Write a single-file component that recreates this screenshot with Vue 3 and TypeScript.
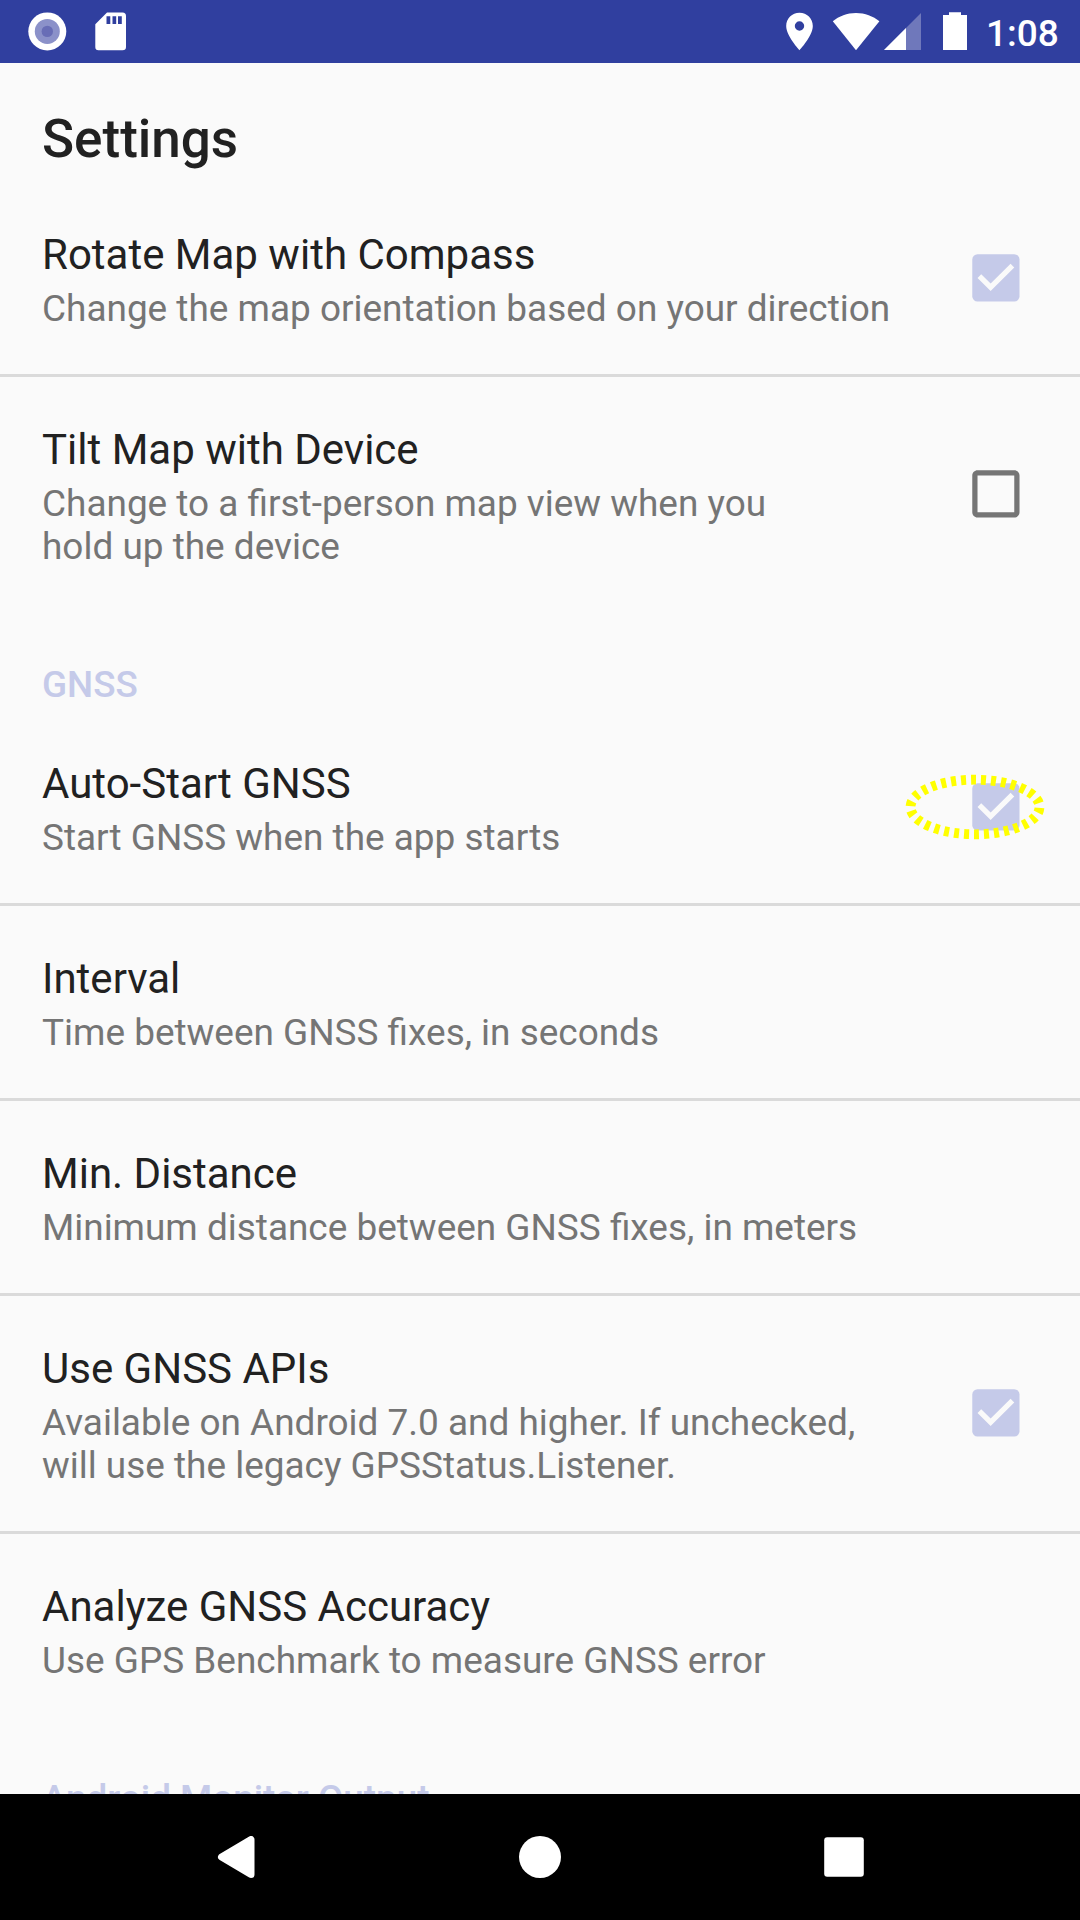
<script setup lang="ts">
interface Preference {
  title: string
  summary: string[]
  checked?: boolean
  highlighted?: boolean
}

interface Section {
  heading?: string
  items: Preference[]
}

const sections: Section[] = [
  {
    items: [
      { title: 'Rotate Map with Compass', summary: ['Change the map orientation based on your direction'], checked: true },
      { title: 'Tilt Map with Device', summary: ['Change to a first-person map view when you', 'hold up the device'], checked: false },
    ],
  },
  {
    heading: 'GNSS',
    items: [
      { title: 'Auto-Start GNSS', summary: ['Start GNSS when the app starts'], checked: true, highlighted: true },
      { title: 'Interval', summary: ['Time between GNSS fixes, in seconds'] },
      { title: 'Min. Distance', summary: ['Minimum distance between GNSS fixes, in meters'] },
      { title: 'Use GNSS APIs', summary: ['Available on Android 7.0 and higher. If unchecked,', 'will use the legacy GPSStatus.Listener.'], checked: true },
      { title: 'Analyze GNSS Accuracy', summary: ['Use GPS Benchmark to measure GNSS error'] },
    ],
  },
  { heading: 'Android Monitor Output', items: [] },
]
</script>

<template>
  <div class="screen">
    <header class="status">
      <svg class="notifications" width="140" height="63" viewBox="0 0 140 63">
        <circle cx="47.3" cy="31.4" r="19" fill="#fff" />
        <circle cx="47.3" cy="31.4" r="12.5" fill="#8b91c9" />
        <circle cx="47.3" cy="31.4" r="5.7" fill="#686db6" />
        <path fill="#fff" fill-rule="evenodd" d="M107 12.500H122.500Q126 12.500 126 16V47Q126 50.300 122.500 50.300H98.500Q95.300 50.300 95.300 47V24.200ZM106.500 16.300V24H110.300V16.300ZM112.500 16.300V24H116.200V16.300ZM118 16.300V24H121.800V16.300Z" />
      </svg>
      <div class="system">
        <svg width="190" height="63" viewBox="780 0 190 63">
          <path fill="#fff" fill-rule="evenodd" d="M799.500 12.700C792.100 12.700 786.200 18.600 786.200 26C786.200 36 799.500 50.200 799.500 50.200S812.800 36 812.800 26C812.800 18.600 806.900 12.700 799.500 12.700ZM799.500 30.700A4.700 4.700 0 1 1 799.500 21.300A4.700 4.700 0 1 1 799.500 30.700Z" />
          <path fill="#fff" d="M856 50.200L832.800 21.300C839 16 847 12.900 856 12.900S873 16 879.400 21.300Z" />
          <path fill="#6f78bb" d="M884 50L921 12.900V50Z" />
          <path fill="#fff" d="M884 50L906 28V50Z" />
          <path fill="#fff" d="M949 12.200H961V15H967V50H943V15H949Z" />
        </svg>
        <span class="clock">1:08</span>
      </div>
    </header>

    <main class="content">
      <h1>Settings</h1>
      <section v-for="(section, s) in sections" :key="s">
        <h2 v-if="section.heading">{{ section.heading }}</h2>
        <div v-for="item in section.items" :key="item.title" class="row">
          <div class="text">
            <div class="title">{{ item.title }}</div>
            <div v-for="line in item.summary" :key="line" class="summary">{{ line }}</div>
          </div>
          <div v-if="item.checked !== undefined" class="check">
            <svg class="box" width="63" height="63" viewBox="-0.15 -0.15 24 24">
              <template v-if="item.checked">
                <rect x="3" y="3" width="18" height="18" rx="2" fill="#c5cae9" />
                <path fill="#fafafa" d="M10 17l-5-5 1.410-1.410L10 14.170l7.590-7.590L19 8z" />
              </template>
              <path v-else fill="#757575" d="M19 5v14H5V5h14m0-2H5c-1.100 0-2 .9-2 2v14c0 1.100.9 2 2 2h14c1.100 0 2-.9 2-2V5c0-1.100-.9-2-2-2z" />
            </svg>
            <svg v-if="item.highlighted" class="halo" width="150" height="76" viewBox="0 0 150 76">
              <ellipse cx="75" cy="38" rx="64.500" ry="27.300" fill="none" stroke="#ff0" stroke-width="9.800" pathLength="300" stroke-dasharray="5 5" stroke-dashoffset="-1" />
            </svg>
          </div>
        </div>
      </section>
    </main>

    <nav class="keys">
      <span><svg width="42" height="42" viewBox="0 0 42 42"><path fill="#fff" stroke="#fff" stroke-width="7" stroke-linejoin="round" d="M6.500 21L36 3.500V38.500Z" /></svg></span>
      <span><svg width="42" height="42" viewBox="0 0 42 42"><circle cx="21" cy="21" r="21" fill="#fff" /></svg></span>
      <span><svg width="42" height="42" viewBox="0 0 42 42"><rect x="1.200" y="1.200" width="39.600" height="39.600" rx="3" fill="#fff" /></svg></span>
    </nav>
  </div>
</template>

<style>
body {
  margin: 0;
  background: #fafafa;
}
</style>

<style scoped>
.screen {
  width: 1080px;
  height: 1920px;
  display: flex;
  flex-direction: column;
  overflow: hidden;
  background: #fafafa;
  font-family: Roboto, "Liberation Sans", sans-serif;
  color: #212121;
}
svg {
  display: block;
}
.status {
  flex: none;
  height: 63px;
  display: flex;
  justify-content: space-between;
  background: #303f9f;
}
.system {
  display: flex;
  padding-right: 21px;
}
.clock {
  margin-left: 16px;
  width: 73px;
  white-space: nowrap;
  font-size: 37px;
  font-weight: 500;
  line-height: 67px;
  color: #fff;
}
.content {
  flex: 1;
  min-height: 0;
  overflow: hidden;
}
h1 {
  height: 119px;
  margin: 0;
  padding: 0 42px;
  box-sizing: border-box;
  font-size: 53px;
  font-weight: 500;
  line-height: 153px;
}
h2 {
  height: 43px;
  margin: 0;
  padding: 51px 42px 5px;
  font-size: 36.85px;
  font-weight: 500;
  line-height: 43px;
  color: #c5cae9;
}
.row {
  display: flex;
  align-items: center;
  justify-content: space-between;
  padding: 48px 53px 44px 42px;
}
.row + .row {
  border-top: 3px solid #dadada;
}
.title {
  margin-bottom: 8px;
  font-size: 42px;
  line-height: 49px;
}
.summary {
  font-size: 36.95px;
  line-height: 43px;
  color: #757575;
}
.text {
  white-space: nowrap;
}
.check {
  position: relative;
  width: 63px;
  height: 63px;
  margin: -11.2px 0 -5.8px;
}
.box {
  position: relative;
}
.halo {
  position: absolute;
  left: -64px;
  top: -6px;
}
.keys {
  flex: none;
  height: 126px;
  display: flex;
  justify-content: center;
  background: #000;
}
.keys span {
  width: 304px;
  display: flex;
  align-items: center;
  justify-content: center;
}
</style>
